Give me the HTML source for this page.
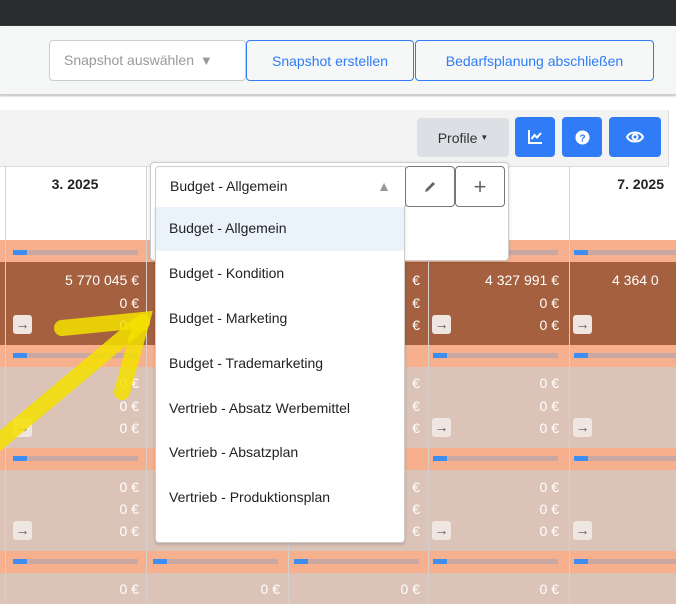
<!DOCTYPE html>
<html><head><meta charset="utf-8"><style>
*{box-sizing:border-box;margin:0;padding:0}
html,body{width:676px;height:604px;overflow:hidden}
body{position:relative;background:#fff;font-family:"Liberation Sans",sans-serif;font-size:14px;color:#222}
.a{position:absolute}
.btn{position:absolute;border:1px solid #2f7cf6;border-radius:4px;color:#2f7cf6;display:flex;align-items:center;justify-content:center;background:#f6f7f7;font-size:14px}
.bb{position:absolute;background:#2f7cf6;border-radius:4px;display:flex;align-items:center;justify-content:center}
.col{position:absolute;top:166px;height:438px;border-left:1px solid #d6d0cc}
.strip{position:absolute;left:0;width:676px;background:#f6b08e}
.bar{position:absolute;height:5px;background:#c9a7a3;width:125px}
.bar i{display:block;width:14px;height:5px;background:#3d8ef0}
.v{position:absolute;color:#fff;font-size:14px;text-align:right;width:120px}
.ar{position:absolute;width:19px;height:19px;background:#efe6e2;border-radius:3px;color:#555;font-size:14px;line-height:19px;text-align:center}
.it{position:absolute;left:169px;font-size:14px;color:#222}
</style></head><body>
<div class="a" style="left:0;top:0;width:676px;height:26px;background:#2b2c2f"></div>
<div class="a" style="left:0;top:26px;width:676px;height:69px;background:#f5f6f6;border-bottom:1px solid #ccc;box-shadow:0 1px 2px #bbb"></div>
<div class="a" style="left:49px;top:40px;width:197px;height:41px;border:1px solid #ccc;border-radius:4px;background:#fff;color:#999;padding:11px 0 0 14px">Snapshot auswählen <span style="font-size:13px;margin-left:2px">▼</span></div>
<div class="btn" style="left:246px;top:40px;width:168px;height:41px">Snapshot erstellen</div>
<div class="btn" style="left:415px;top:40px;width:239px;height:41px">Bedarfsplanung abschließen</div>
<div class="a" style="left:0;top:110px;width:669px;height:56px;background:#f3f3f3;border-right:1px solid #ddd"></div>
<div class="a" style="left:417px;top:118px;width:92px;height:39px;background:#dcdfe3;border-radius:4px;display:flex;align-items:center;justify-content:center;color:#333">Profile <span style="font-size:8px;margin-left:3px">▼</span></div>
<div class="bb" style="left:515px;top:117px;width:40px;height:40px"><svg width="16" height="16" viewBox="0 0 16 16" fill="none" stroke="#fff" stroke-width="2"><path d="M2 1v13h13"/><path d="M4.5 10l3-4 2.5 2.5 4-4.5"/></svg></div>
<div class="bb" style="left:562px;top:117px;width:40px;height:40px"><svg width="15" height="15" viewBox="0 0 16 16"><circle cx="8" cy="8" r="7.5" fill="#fff"/><text x="8" y="12" text-anchor="middle" font-size="11" font-weight="bold" fill="#2f7cf6" font-family="Liberation Sans">?</text></svg></div>
<div class="bb" style="left:609px;top:117px;width:52px;height:40px"><svg width="18" height="14" viewBox="0 0 18 14" fill="none" stroke="#fff" stroke-width="2"><path d="M1 7c3-6 13-6 16 0c-3 6-13 6-16 0z"/><circle cx="9" cy="7" r="2.5"/></svg></div>
<div class="a" style="left:0;top:166px;width:669px;height:74px;background:#fff;border-top:1px solid #ddd"></div>
<div class="a" style="left:0;top:176px;width:150px;text-align:center;font-weight:bold;font-size:14px">3. 2025</div>
<div class="a" style="left:478px;top:176px;font-weight:bold">25</div>
<div class="a" style="left:570px;top:176px;width:100px;text-align:right;font-weight:bold;padding-right:6px">7. 2025</div>
<div class="strip" style="top:240px;height:22px"></div>
<div class="a" style="left:0;top:262px;width:676px;height:83px;background:#a4603f"></div>
<div class="strip" style="top:345px;height:22px"></div>
<div class="a" style="left:0;top:367px;width:676px;height:81px;background:#dcc3b8"></div>
<div class="strip" style="top:448px;height:22px"></div>
<div class="a" style="left:0;top:470px;width:676px;height:81px;background:#dcc3b8"></div>
<div class="strip" style="top:551px;height:22px"></div>
<div class="a" style="left:0;top:573px;width:676px;height:31px;background:#dcc3b8"></div>
<div class="col" style="left:5px"></div>
<div class="col" style="left:146px"></div>
<div class="col" style="left:288px"></div>
<div class="col" style="left:428px"></div>
<div class="col" style="left:569px"></div>
<div class="bar" style="left:13px;top:250px"><i></i></div><div class="bar" style="left:433px;top:250px"><i></i></div><div class="bar" style="left:574px;top:250px"><i></i></div>
<div class="bar" style="left:13px;top:353px"><i></i></div><div class="bar" style="left:433px;top:353px"><i></i></div><div class="bar" style="left:574px;top:353px"><i></i></div>
<div class="bar" style="left:13px;top:456px"><i></i></div><div class="bar" style="left:433px;top:456px"><i></i></div><div class="bar" style="left:574px;top:456px"><i></i></div>
<div class="bar" style="left:13px;top:559px"><i></i></div><div class="bar" style="left:153px;top:559px"><i></i></div><div class="bar" style="left:294px;top:559px"><i></i></div><div class="bar" style="left:433px;top:559px"><i></i></div><div class="bar" style="left:574px;top:559px"><i></i></div>
<div class="v" style="left:19px;top:272px">5 770 045 €</div><div class="v" style="left:19px;top:295px">0 €</div><div class="v" style="left:19px;top:317px">0 €</div>
<div class="v" style="left:19px;top:375px">0 €</div><div class="v" style="left:19px;top:398px">0 €</div><div class="v" style="left:19px;top:420px">0 €</div>
<div class="v" style="left:19px;top:479px">0 €</div><div class="v" style="left:19px;top:501px">0 €</div><div class="v" style="left:19px;top:523px">0 €</div>
<div class="v" style="left:19px;top:581px">0 €</div><div class="v" style="left:160px;top:581px">0 €</div><div class="v" style="left:300px;top:581px">0 €</div>
<div class="v" style="left:300px;top:272px">€</div><div class="v" style="left:300px;top:295px">€</div><div class="v" style="left:300px;top:317px">€</div>
<div class="v" style="left:300px;top:375px">€</div><div class="v" style="left:300px;top:398px">€</div><div class="v" style="left:300px;top:420px">€</div>
<div class="v" style="left:300px;top:479px">€</div><div class="v" style="left:300px;top:501px">€</div><div class="v" style="left:300px;top:523px">€</div>
<div class="v" style="left:439px;top:272px">4 327 991 €</div><div class="v" style="left:439px;top:295px">0 €</div><div class="v" style="left:439px;top:317px">0 €</div>
<div class="v" style="left:439px;top:375px">0 €</div><div class="v" style="left:439px;top:398px">0 €</div><div class="v" style="left:439px;top:420px">0 €</div>
<div class="v" style="left:439px;top:479px">0 €</div><div class="v" style="left:439px;top:501px">0 €</div><div class="v" style="left:439px;top:523px">0 €</div>
<div class="v" style="left:439px;top:581px">0 €</div>
<div class="a" style="left:612px;top:272px;color:#fff;white-space:nowrap">4 364 0</div>
<div class="ar" style="left:13px;top:315px">→</div><div class="ar" style="left:13px;top:418px">→</div><div class="ar" style="left:13px;top:521px">→</div>
<div class="ar" style="left:432px;top:315px">→</div><div class="ar" style="left:432px;top:418px">→</div><div class="ar" style="left:432px;top:521px">→</div>
<div class="ar" style="left:573px;top:315px">→</div><div class="ar" style="left:573px;top:418px">→</div><div class="ar" style="left:573px;top:521px">→</div>
<svg class="a" style="left:0;top:0" width="676" height="604"><g stroke="#f5e000" stroke-opacity="0.85" stroke-width="16" stroke-linecap="round" fill="none"><path d="M-5 445L142 322"/><path d="M62 328L142 320L122 392"/></g></svg>
<div class="a" style="left:150px;top:162px;width:359px;height:99px;background:#fff;border:1px solid #ccc;border-radius:4px;box-shadow:0 1px 3px rgba(0,0,0,.15)"></div>
<div class="a" style="left:155px;top:166px;width:251px;height:41px;border:1px solid #ccc;border-radius:4px 0 0 0;background:#fff;padding:11px 0 0 14px">Budget - Allgemein<span style="position:absolute;right:14px;top:11px;font-size:14px;color:#999">▲</span></div>
<div class="a" style="left:405px;top:166px;width:50px;height:41px;border:1px solid #777;border-radius:4px;display:flex;align-items:center;justify-content:center"><svg width="14" height="14" viewBox="0 0 14 14"><path d="M2 12l1-3 7-7 2 2-7 7z" fill="#666"/></svg></div>
<div class="a" style="left:455px;top:166px;width:50px;height:41px;border:1px solid #777;border-radius:4px;display:flex;align-items:center;justify-content:center;color:#666;font-size:22px;font-weight:300">+</div>
<div class="a" style="left:155px;top:206px;width:250px;height:337px;background:#fff;border:1px solid #ccc;border-top:none;border-radius:0 0 4px 4px;box-shadow:0 2px 3px rgba(0,0,0,.15)"></div>
<div class="a" style="left:156px;top:207px;width:248px;height:44px;background:#eaf2fc"></div>
<div class="it" style="top:220px">Budget - Allgemein</div>
<div class="it" style="top:265px">Budget - Kondition</div>
<div class="it" style="top:310px">Budget - Marketing</div>
<div class="it" style="top:355px">Budget - Trademarketing</div>
<div class="it" style="top:400px">Vertrieb - Absatz Werbemittel</div>
<div class="it" style="top:444px">Vertrieb - Absatzplan</div>
<div class="it" style="top:489px">Vertrieb - Produktionsplan</div>
</body></html>
